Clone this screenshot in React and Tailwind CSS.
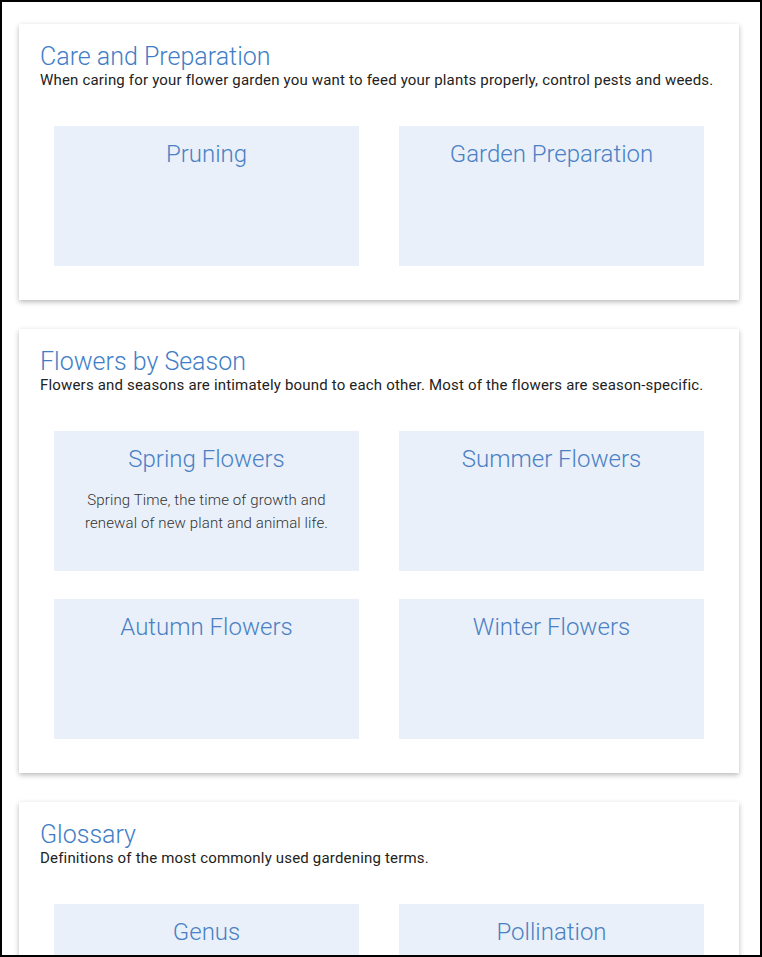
import React from "react";

const sections = [
  {
    title: "Care and Preparation",
    desc: "When caring for your flower garden you want to feed your plants properly, control pests and weeds.",
    tiles: [{ name: "Pruning" }, { name: "Garden Preparation" }],
  },
  {
    title: "Flowers by Season",
    desc: "Flowers and seasons are intimately bound to each other. Most of the flowers are season-specific.",
    tiles: [
      {
        name: "Spring Flowers",
        text: "Spring Time, the time of growth and renewal of new plant and animal life.",
      },
      { name: "Summer Flowers" },
      { name: "Autumn Flowers" },
      { name: "Winter Flowers" },
    ],
  },
  {
    title: "Glossary",
    desc: "Definitions of the most commonly used gardening terms.",
    tiles: [{ name: "Genus" }, { name: "Pollination" }],
  },
];

const Tile = ({ name, text }) => (
  <div className="h-[140px] bg-[#e9f0f9] pt-[12px] px-5 text-center">
    <h3 className="text-[24px] leading-[32px] font-light text-[#4a80c4]">{name}</h3>
    {text && (
      <p className="mt-[14px] text-[15px] leading-[23px] font-light tracking-[0.12px] text-[#333]">
        {text}
      </p>
    )}
  </div>
);

export default function App() {
  return (
    <div
      className="h-[957px] overflow-hidden border-2 border-black bg-white"
      style={{ fontFamily: "Roboto, 'Liberation Sans', sans-serif" }}
    >
      <div className="flex flex-col gap-[29px] pl-[17px] pt-[22px]">
        {sections.map((s) => (
          <section
            key={s.title}
            className="w-[720px] bg-white px-[21px] pt-[18px] pb-[34px] shadow-[0_2px_5px_rgba(0,0,0,0.28)]"
          >
            <h2 className="text-[25px] leading-[30px] font-light text-[#3f7ec6]">{s.title}</h2>
            <p className="-mt-[1px] text-[15px] leading-[18px] tracking-[0.18px] text-[#222]">{s.desc}</p>
            <div className="mt-[37px] grid grid-cols-2 gap-x-[40px] gap-y-[28px] px-[14px]">
              {s.tiles.map((t) => (
                <Tile key={t.name} {...t} />
              ))}
            </div>
          </section>
        ))}
      </div>
    </div>
  );
}
